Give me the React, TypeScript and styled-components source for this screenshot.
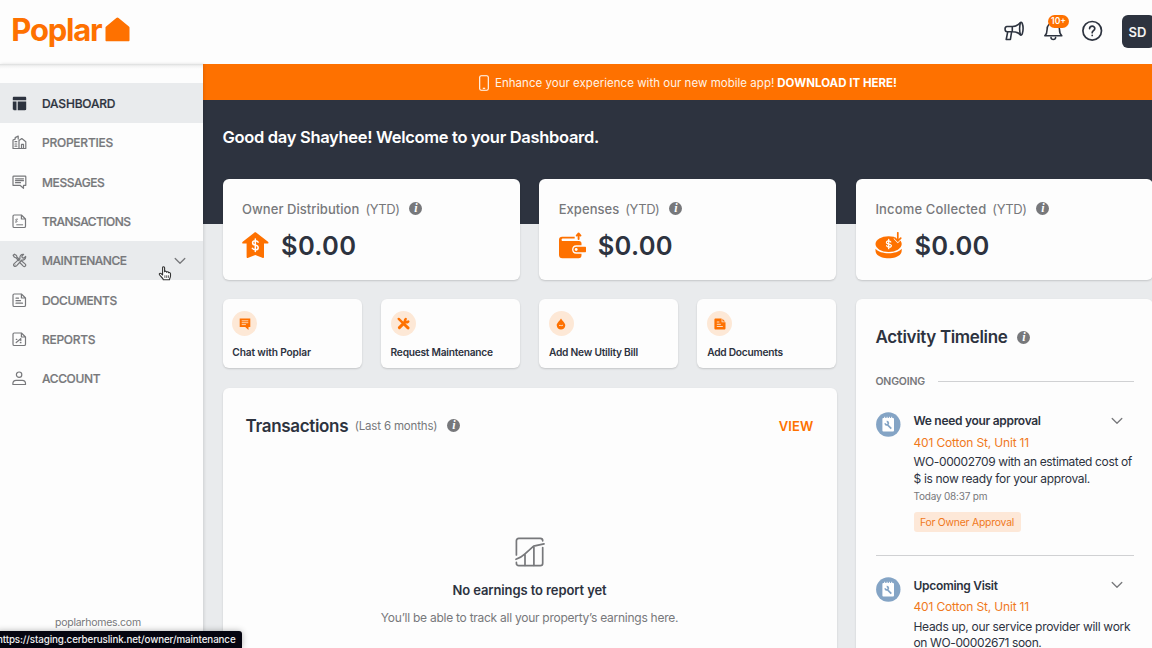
import type { ReactNode } from 'react';
import styled, { createGlobalStyle } from 'styled-components';

// --- Theme values ---
const orange = '#fe7100';
const navy = '#2d333f';
const grey = '#77787b';
const sans = `Inter, 'Liberation Sans', sans-serif`;

const GlobalStyle = createGlobalStyle`
  * {
    box-sizing: border-box;
  }

  body {
    margin: 0;
    overflow: hidden;
    font-family: ${sans};
    color: ${navy};
    background: #e9ebed;
  }
`;

// --- Layout ---
const Page = styled.div`
  position: relative;
  display: flex;
  flex-direction: column;
  width: 1152px;
  height: 648px;
  overflow: hidden;
`;

const Header = styled.header`
  display: flex;
  justify-content: space-between;
  flex: none;
  height: 64px;
  padding-left: 11.3px;
  background: #fdfdfd;
`;

const Logo = styled.div`
  display: flex;
  align-items: flex-start;
  padding-top: 12px;
  color: ${orange};
  font-size: 31px;
  line-height: 36px;
  font-weight: 700;
  letter-spacing: -1.2px;

  svg {
    margin: 5px 0 0 3px;
  }
`;

const HeaderTools = styled.div`
  display: flex;
  align-items: flex-start;
  padding-top: 20px;
  margin-right: -3px;
  color: ${navy};
`;

const ToolButton = styled.div`
  position: relative;
  width: 22px;
  height: 22px;
  margin-right: 17px;

  svg {
    display: block;
  }
`;

const CountBadge = styled.span`
  position: absolute;
  left: 6px;
  top: -5px;
  width: 21px;
  height: 13px;
  border-radius: 7px;
  background: ${orange};
  color: #fff;
  font-size: 8.5px;
  line-height: 13px;
  font-weight: 600;
  text-align: center;
`;

const Avatar = styled.div`
  width: 33px;
  height: 33px;
  margin: -5.5px 0 0 2px;
  padding-right: 2px;
  border-radius: 6px;
  background: ${navy};
  color: #f4f4f4;
  font-size: 13px;
  line-height: 34px;
  font-weight: 600;
  text-align: center;
`;

const Body = styled.div`
  display: flex;
  flex: 1;
  min-height: 0;
`;

const Sidebar = styled.nav`
  position: relative;
  display: flex;
  flex-direction: column;
  flex: none;
  width: 203px;
  padding-top: 19.3px;
  background: linear-gradient(#dcdddd, #f3f3f3 2px, #fdfdfd 5px);
  box-shadow: 1px 0 3px rgba(0, 0, 0, 0.12);
`;

const NavItem = styled.a<{ $active?: boolean; $hovered?: boolean }>`
  display: flex;
  align-items: center;
  height: 39.35px;
  padding: 1px 17px 0 12px;
  background: ${({ $active, $hovered }) => ($active || $hovered ? '#e9ebed' : 'none')};
  color: ${({ $active }) => ($active ? navy : grey)};
  font-size: 12px;
  font-weight: 500;
  -webkit-text-stroke: 0.2px;

  svg {
    flex: none;
  }
`;

const NavLabel = styled.span<{ $ls: number }>`
  flex: 1;
  margin-left: 15px;
  letter-spacing: ${({ $ls }) => $ls}px;
`;

const SiteLink = styled.div`
  margin: auto 0 17px 55px;
  color: ${grey};
  font-size: 10.5px;
  line-height: 17px;
  letter-spacing: -0.25px;
`;

const Main = styled.main`
  display: flex;
  flex-direction: column;
  flex: 1;
  min-width: 0;
`;

const Banner = styled.div`
  display: flex;
  align-items: center;
  flex: none;
  height: 36px;
  padding: 1px 0 0 276px;
  background: ${orange};
  color: #fff3e6;
  font-size: 11.5px;
  white-space: nowrap;

  svg {
    flex: none;
    margin-right: 6px;
  }

  b {
    margin-left: 3px;
    color: #fff;
    font-weight: 700;
    letter-spacing: 0.02px;
  }
`;

const BannerText = styled.span`
  letter-spacing: 0.025px;
`;

const Hero = styled.div`
  flex: none;
  height: 124px;
  padding: 27px 0 0 19.5px;
  background: ${navy};
`;

const Greeting = styled.h1`
  margin: 0;
  color: #fff;
  font-size: 16.5px;
  line-height: 21px;
  font-weight: 600;
  letter-spacing: -0.31px;
  white-space: nowrap;
`;

const Dashboard = styled.div`
  display: grid;
  grid-template-columns: 614px 297px;
  grid-template-rows: 101px 1fr;
  gap: 19.5px;
  width: 931px;
  margin: -45.5px 0 0 19.5px;
  flex: 1;
  min-height: 0;
`;

const StatRow = styled.div`
  grid-column: 1 / 3;
  display: grid;
  grid-template-columns: repeat(3, 297.2px);
  gap: 19.5px;
`;

const Column = styled.div`
  display: flex;
  flex-direction: column;
  gap: 19.5px;
`;

const Card = styled.section`
  background: #fdfdfd;
  border-radius: 6px;
  box-shadow: 0 1px 2px rgba(0, 0, 0, 0.16);
`;

const StatCard = styled(Card)`
  padding: 21.5px 19.5px 0;
`;

const StatTitle = styled.div`
  display: flex;
  align-items: center;
  height: 17px;
  color: ${grey};
  font-size: 13px;
  white-space: nowrap;
`;

const StatName = styled.span<{ $ls: number }>`
  font-weight: 500;
  letter-spacing: ${({ $ls }) => $ls}px;
`;

const StatPeriod = styled.span`
  margin: 0 10px 0 6px;
  letter-spacing: -0.45px;
`;

const StatValue = styled.div`
  display: flex;
  align-items: center;
  height: 32px;
  margin-top: 12px;
  font-size: 25.5px;
  font-weight: 600;
  letter-spacing: 0.3px;

  svg {
    flex: none;
    margin-right: 12px;
  }
`;

const InfoDot = styled.span`
  display: inline-block;
  flex: none;
  width: 13px;
  height: 13px;
  border-radius: 50%;
  background: ${grey};
  color: #fff;
  font: italic bold 12px/13px 'Liberation Serif', serif;
  text-align: center;
`;

const ActionRow = styled.div`
  display: grid;
  grid-template-columns: repeat(4, 139px);
  gap: 19.3px;
  height: 69px;
`;

const ActionCard = styled(Card)`
  padding: 12px 9.8px 0;
`;

const ActionIcon = styled.div`
  display: flex;
  align-items: center;
  justify-content: center;
  width: 25px;
  height: 25px;
  border-radius: 50%;
  background: #fde8d6;
  color: ${orange};
`;

const ActionLabel = styled.div<{ $ls: number }>`
  margin-top: 8.7px;
  font-size: 10.2px;
  line-height: 14px;
  font-weight: 600;
  letter-spacing: ${({ $ls }) => $ls}px;
  white-space: nowrap;
`;

const TransactionsCard = styled(Card)`
  display: flex;
  flex-direction: column;
  align-items: center;
  flex: 1;
  padding: 26px 23px 0;
`;

const CardHead = styled.div`
  display: flex;
  align-items: center;
  align-self: stretch;
  height: 24px;
`;

const CardTitle = styled.h2<{ $ls: number; $gap?: number }>`
  margin: 0 ${({ $gap = 0 }) => $gap}px 0 0;
  font-size: 17px;
  font-weight: 600;
  letter-spacing: ${({ $ls }) => $ls}px;
  white-space: nowrap;
`;

const CardNote = styled.span`
  margin: 0 10px 0 6.5px;
  color: ${grey};
  font-size: 11.5px;
  letter-spacing: -0.17px;
`;

const ViewLink = styled.a`
  margin-left: auto;
  color: ${orange};
  font-size: 13px;
  font-weight: 600;
  letter-spacing: 0.15px;
`;

const EmptyTitle = styled.div`
  margin-top: 13px;
  font-size: 13px;
  line-height: 20px;
  font-weight: 600;
  letter-spacing: -0.1px;
`;

const EmptyNote = styled.div`
  margin-top: 8px;
  color: ${grey};
  font-size: 12px;
  line-height: 20px;
  letter-spacing: -0.26px;
`;

const TimelineCard = styled(Card)`
  padding: 26px 19px 0 19.5px;
`;

const GroupLabel = styled.div`
  display: flex;
  align-items: center;
  gap: 13px;
  height: 14px;
  margin: 25px 0 3px;
  color: ${grey};
  font-size: 10.5px;
  font-weight: 600;
  letter-spacing: -0.2px;

  &::after {
    content: '';
    flex: 1;
    height: 1px;
    background: #d0d1d3;
  }
`;

const TimelineItem = styled.article`
  display: flex;
  align-items: flex-start;
  padding: 21px 0 22.5px;
  border-bottom: 1px solid #d0d1d3;
`;

const TimelineText = styled.div`
  flex: 1;
  margin: -1.5px 0 0 13px;
`;

const TimelineTitle = styled.div`
  display: flex;
  align-items: center;
  justify-content: space-between;
  height: 20px;
  padding-right: 11px;
  font-size: 12px;
  font-weight: 600;
  letter-spacing: -0.3px;
`;

const Address = styled.div`
  height: 22px;
  color: #f0791c;
  font-size: 12px;
  line-height: 23px;
  letter-spacing: -0.16px;
`;

const Details = styled.p`
  margin: 1.500px -10px 0 0;
  font-size: 12px;
  line-height: 16.5px;
`;

const DetailLine = styled.span<{ $ls: number }>`
  display: block;
  letter-spacing: ${({ $ls }) => $ls}px;
  white-space: nowrap;
`;

const Time = styled.div`
  height: 16px;
  margin-top: 1px;
  color: ${grey};
  font-size: 10px;
  line-height: 16px;
  letter-spacing: -0.2px;
`;

const StatusTag = styled.span`
  display: block;
  width: 107px;
  height: 20px;
  margin-top: 8px;
  border-radius: 3px;
  background: #fde8d8;
  color: #f0791c;
  font-size: 10.4px;
  line-height: 21px;
  letter-spacing: -0.22px;
  text-align: center;
`;

// Link preview the browser shows over the page
const LinkPreview = styled.div`
  position: absolute;
  left: -3px;
  bottom: 0;
  width: 245px;
  height: 17px;
  border-top-right-radius: 3px;
  background: #050510;
  box-shadow: 0 0 6px rgba(0, 0, 0, 0.3);
  color: #f2f2f2;
  font-size: 9.8px;
  line-height: 17px;
  font-weight: 500;
  letter-spacing: -0.12px;
  white-space: nowrap;
`;

const Cursor = styled.div`
  position: absolute;
  left: 157.5px;
  top: 265.5px;
`;

// --- Icons ---
interface IconProps {
  size?: number;
  box?: string;
  width?: number;
  children: ReactNode;
}

function Line({ size = 15, box = '0 0 15 15', width = 1.2, children }: IconProps) {
  return (
    <svg width={size} height={size} viewBox={box} fill="none" stroke="currentColor" strokeWidth={width} strokeLinecap="round" strokeLinejoin="round">
      {children}
    </svg>
  );
}

const Chevron = () => (
  <svg width="12" height="8" viewBox="0 0 12 8" fill="none" stroke={grey} strokeWidth="1.3" strokeLinecap="round" strokeLinejoin="round">
    <path d="M1.2 1.5 6 6.2l4.8-4.7" />
  </svg>
);

const pageOutline = 'M2.2 1h7.2L13.5 5v7.2c0 .8-.5 1.3-1.3 1.3H2.2C1.4 13.5 1 13 1 12.2V2.2C1 1.4 1.4 1 2.2 1ZM9.4 1v4h4.1';

const DashboardIcon = () => (
  <svg width="15" height="15" viewBox="0 0 15 15" fill="currentColor">
    <path d="M2 .8h11c.8 0 1.2.4 1.2 1.2v2.2H.8V2C.8 1.2 1.2.8 2 .8ZM.8 5.4h3.7v8.8H2c-.8 0-1.2-.4-1.2-1.2ZM5.7 5.4h8.5V13c0 .8-.4 1.2-1.2 1.2H5.7Z" />
  </svg>
);

const PropertiesIcon = () => (
  <Line>
    <path d="M1 13.5V5l2.200-.9V2.600l3-1.500v3M1 13.500h12.800V6.700L9.800 3.500 7 5.600v7.900M9.500 13.500V9.300h2v4.200" />
    <path d="M3 6.700h1.800M3 9h1.800M3 11.200h1.800" />
  </Line>
);

const MessagesIcon = () => (
  <Line>
    <path d="M1.800 1.200h11.400c.4 0 .6.2.6.600v8.500H11.500v3L8 10.300H1V1.800c0-.4.300-.6.800-.6Z" />
    <path d="M3.500 3.800h8M3.500 5.700h8M3.500 7.700h5" />
  </Line>
);

const TransactionsIcon = () => (
  <Line>
    <path d={pageOutline} />
    <path d="M5.500 5.200H4.400c-1 0-1 1.400 0 1.400s1.100 1.400 0 1.400H3.400M4.700 10.800h6" strokeWidth="1" />
  </Line>
);

const ToolsIcon = () => (
  <Line>
    <path d="m1.200 2.300 1.300-1.100 2 1.200.4 1.400 3 3M1.200 2.300l1.300 2 1.400.5 3 2.900" />
    <path d="M8 5.400c-.5-2 1-4.500 3.600-4.100L9.900 3.200l.3 1.500 1.600.4 1.800-1.800c.5 2.500-1.700 4.200-3.800 3.700L4.500 12.900c-1.700 1.700-3.900-.6-2.300-2.300Z" />
    <path d="m9.400 7.800 3.900 3.300c1.200 1.400-.6 3.300-2 2L7.700 9.500M3.200 12h.1" />
  </Line>
);

const DocumentsIcon = () => (
  <Line>
    <path d={pageOutline} />
    <path d="M4 5.200h2.500M4 7.700h4.500M4 10.200h6.500" />
  </Line>
);

const ReportsIcon = () => (
  <Line>
    <path d={pageOutline} />
    <path d="m4.200 10.500 4.600-3.800M8.800 6.700v2M4.300 7.400h.5M8.300 10.700h.7" />
  </Line>
);

const AccountIcon = () => (
  <Line>
    <circle cx="7.100" cy="3.700" r="2.700" />
    <path d="M.9 13.500v-1c0-2 1.300-3.200 3.200-3.200h6.200c1.900 0 3.200 1.200 3.200 3.200v1Z" />
  </Line>
);

const MegaphoneIcon = () => (
  <Line size={22} box="0 0 22 22" width={1.6}>
    <path d="M4 6.500h5.500c3 0 5.500-1.300 8-3.900 1.300-1.300 2.600 2 2.600 6s-1.300 7.500-2.600 6.200c-2.500-2.300-5-3.100-8-3.100H4.100c-2.500 0-2.900-5-.1-5.200ZM9.300 6.500v5.200M4.700 11.800 3.200 19.500h4.200l1.200-7.600" />
    <path d="M17.500 2.700c-1.200 2.800-1.200 9.300 0 12" />
  </Line>
);

const BellIcon = () => (
  <Line size={22} box="0 0 22 22" width={1.6}>
    <path d="M2.800 15.800c1.700-1.500 2.300-3.200 2.300-6.300 0-4 2.300-6.500 6.200-6.500s6.200 2.500 6.200 6.500c0 3.100.6 4.800 2.300 6.300ZM9 17.500c.2 2.700 4.400 2.700 4.600 0" />
  </Line>
);

const HelpIcon = () => (
  <Line size={22} box="0 0 22 22" width={1.7}>
    <circle cx="11.200" cy="10.800" r="9.300" />
    <path d="M8.600 8.600c0-3.300 5.300-3.100 5.200 0 0 2.100-2.600 2-2.600 4.100M11.200 15.300v.2" />
  </Line>
);

const PhoneIcon = () => (
  <svg width="10" height="16" viewBox="0 0 10 16" fill="none" stroke="#fff" strokeWidth="1.1">
    <rect x=".7" y=".7" width="8.600" height="14.600" rx="1.600" />
    <path d="M3.800 13.300h2.400" />
  </svg>
);

const PayoutIcon = () => (
  <svg width="27" height="27" viewBox="0 0 27 27">
    <path d="M12.200.8c.7-.6 1.500-.6 2.200 0L26 9.700c.9.800.5 1.900-.7 1.900H22v13.200c0 1.200-.7 1.600-1.700 1l-7-2.700-7 2.700c-1 .6-1.700.2-1.700-1V11.600H1.300c-1.200 0-1.500-1.100-.6-1.900Z" fill={orange} />
    <path d="M16.100 10.100c-.6-1-1.500-1.300-2.800-1.300-3.600 0-3.600 4 0 4.400 3.900.4 3.800 4.600.1 4.600-1.400 0-2.400-.5-3-1.400M13.300 7v12.600" fill="none" stroke="#fff" strokeWidth="1.5" strokeLinecap="round" />
  </svg>
);

const WalletIcon = () => (
  <svg width="27" height="27" viewBox="0 0 27 27">
    <path d="M0 7.700c0-1.900 1.200-3 3.100-3h12.600V6.500H3.500c-1.300.2-1.200 2.500.2 2.600H20c1.600 0 2.500.9 2.500 2.500v1.600h-5.300c-5.500 0-5.500 8.500 0 8.500h5.300v1.600c0 1.900-1 3-2.900 3H3.400C1.200 26.300 0 25 0 23Z" fill={orange} />
    <path d="M17.200 14.700H26c.7 0 1 .4 1 1v3.600c0 .7-.3 1-1 1h-8.800c-3.700 0-3.700-5.600 0-5.600Z" fill={orange} />
    <circle cx="17.200" cy="17.500" r="1.400" fill="#fff" />
    <path d="M19.600 7V1.900M17.700 3.600l1.900-2.100 1.900 2.100" fill="none" stroke={orange} strokeWidth="1.900" strokeLinecap="round" strokeLinejoin="round" />
  </svg>
);

const CoinIcon = () => (
  <svg width="27" height="27" viewBox="0 0 27 27">
    <ellipse cx="13.600" cy="12.100" rx="13.100" ry="7.900" fill={orange} />
    <path d="M.5 16.800c4.800 6 21.400 6 26.200 0v2c0 9.900-26.200 9.900-26.200 0Z" fill={orange} />
    <path d="M22.800 1v6.500M20 5.300l2.800 2.900 2.900-2.900" fill="none" stroke="#fdfdfd" strokeWidth="4.200" />
    <path d="M15.800 10c-1.300-2.100-5-1.100-4.200 1 .7 1.600 4.200.4 4.700 2.400.4 2.100-3.700 2.500-4.700.4M13.700 7.500v9.200" fill="none" stroke="#fff" strokeWidth="1.300" strokeLinecap="round" />
    <path d="M22.800.8v8M20 6.200l2.800 2.900 2.900-2.900" fill="none" stroke={orange} strokeWidth="1.700" strokeLinecap="round" />
  </svg>
);

const ChatFill = () => (
  <svg width="12" height="12" viewBox="0 0 12 12">
    <path d="M.7.5h10.600v8.400H9.500V12L6.200 8.900H.7Z" fill={orange} />
    <path d="M2.700 2.800h6.600M2.700 4.700h6.600M2.700 6.600h4.200" stroke="#fde8d6" strokeWidth=".8" />
  </svg>
);

const ToolsFill = () => (
  <svg width="13" height="13" viewBox="0 0 13 13" fill="none" stroke={orange} strokeLinecap="round">
    <path d="m1.700 1.900 3.600 3.500" strokeWidth="2.400" />
    <path d="m8 8 3 2.900M2.400 10.600l6-6" strokeWidth="2.900" />
    <path d="M8.700 1.900c-2 2.600.4 4.500 2.600 2.600" strokeWidth="2.400" />
  </svg>
);

const DropFill = () => (
  <svg width="10" height="12" viewBox="0 0 10 12">
    <path d="M5 .5C4.500 1.900.7 4.900.7 7.300c0 5.700 8.600 5.700 8.600 0C9.300 4.900 5.500 1.900 5 .5Z" fill={orange} />
    <path d="M3 7.700c1.200-1.200 2.300.8 4-.6" fill="none" stroke="#fde8d6" strokeWidth=".9" />
  </svg>
);

const DocFill = () => (
  <svg width="12" height="12" viewBox="0 0 12 12">
    <path d="M1.600.5h6v3.700h3.900v6c0 .8-.4 1.300-1.300 1.300H1.600C.8 11.500.4 11 .4 10.200V1.800C.4 1 .8.5 1.6.5ZM8.400.7l2.800 2.800H8.400Z" fill={orange} />
    <path d="M2.800 4h2.500M2.800 6.300h4M2.800 8.500h6" stroke="#fde8d6" strokeWidth=".9" />
  </svg>
);

const EmptyChart = styled.svg`
  flex: none;
  margin-top: 99px;
`;

const ChartIcon = () => (
  <EmptyChart width="30" height="30" viewBox="0 0 30 30" fill="none" stroke={grey} strokeWidth="1.7" strokeLinecap="round" strokeLinejoin="round">
    <path d="M1.400 18V3.800c0-1.600.8-2.400 2.400-2.400h21.500c1.600 0 2.400.8 2.400 2.400M27.700 10.500v15.700c0 1.600-.8 2.400-2.400 2.400H3.800c-1.600 0-2.400-.8-2.400-2.400v-.8" />
    <path d="M1 22.300c3.500-1.100 6.300-2.900 9-5.400l8.600-7.700L29 6.800M10 28.300V17.500M18.900 28.300V9.500" />
  </EmptyChart>
);

const WorkOrderIcon = () => (
  <svg width="25" height="25" viewBox="0 0 25 25">
    <circle cx="12.300" cy="12.500" r="12.200" fill="#84a4c5" />
    <rect x="6.400" y="6" width="11.600" height="13.600" rx="1" fill="#fff" />
    <path d="M8.700 4.800v2M11.100 4.800v2M13.400 4.800v2M15.700 4.800v2" stroke="#fff" strokeWidth="1" />
    <path d="m11.300 12.700 4 4M9.200 11.200c.1 2.500 3.500 2.100 3.100-.3-.2-1-1-1.300-1.600-1.200" fill="none" stroke="#84a4c5" strokeWidth="1.700" />
  </svg>
);

const HandCursor = () => (
  <svg width="14" height="17" viewBox="0 0 14 17" fill="#fff" stroke="#333" strokeWidth="1.1" strokeLinejoin="round">
    <path d="M4.600 9V1.800c0-1.500 2-1.500 2 0v3.900c.6-1 2-.6 2 .5.700-.8 2-.4 2 .6.900-.6 1.900 0 1.900 1v2.300c0 1.600-1 2.100-1 3.700H5.300c0-1.600-2.400-2.900-3.800-5-.8-1.200.8-2.100 1.700-1.200Z" />
    <path d="M6.900 9.300v2.600M8.700 9.300v2.600M10.400 9.300v2.600" strokeWidth=".8" />
  </svg>
);

// --- Data ---
const navItems = [
  { label: 'DASHBOARD', icon: <DashboardIcon />, ls: -0.18 },
  { label: 'PROPERTIES', icon: <PropertiesIcon />, ls: -0.25 },
  { label: 'MESSAGES', icon: <MessagesIcon />, ls: -0.4 },
  { label: 'TRANSACTIONS', icon: <TransactionsIcon />, ls: -0.53 },
  { label: 'MAINTENANCE', icon: <ToolsIcon />, ls: -0.45 },
  { label: 'DOCUMENTS', icon: <DocumentsIcon />, ls: -0.4 },
  { label: 'REPORTS', icon: <ReportsIcon />, ls: -0.3 },
  { label: 'ACCOUNT', icon: <AccountIcon />, ls: -0.35 },
];

const stats = [
  { name: 'Owner Distribution', icon: <PayoutIcon />, ls: 0.05 },
  { name: 'Expenses', icon: <WalletIcon />, ls: 0.05 },
  { name: 'Income Collected', icon: <CoinIcon />, ls: 0.16 },
];

const actions = [
  { label: 'Chat with Poplar', icon: <ChatFill />, ls: -0.15 },
  { label: 'Request Maintenance', icon: <ToolsFill />, ls: -0.25 },
  { label: 'Add New Utility Bill', icon: <DropFill />, ls: -0.22 },
  { label: 'Add Documents', icon: <DocFill />, ls: -0.25 },
];

const timeline = [
  {
    title: 'We need your approval',
    lines: [
      { text: 'WO-00002709 with an estimated cost of', ls: -0.36 },
      { text: '$ is now ready for your approval.', ls: -0.32 },
    ],
    time: 'Today 08:37 pm',
    status: 'For Owner Approval',
  },
  {
    title: 'Upcoming Visit',
    lines: [
      { text: 'Heads up, our service provider will work', ls: -0.3 },
      { text: 'on WO-00002671 soon.', ls: -0.38 },
    ],
  },
];

export default function App() {
  return (
    <Page>
      <GlobalStyle />
      <Header>
        <Logo>
          Poplar
          <svg width="25" height="25" viewBox="0 0 25 25" fill={orange}>
            <path d="M11.300 1c.8-.7 1.500-.7 2.300 0l10.300 8.400c.4.4.6.700.6 1.200v12.600c0 .8-.3 1.100-1.100 1.100H1.600c-.8 0-1.100-.3-1.100-1.100V10.600c0-.5.200-.8.600-1.200Z" />
          </svg>
        </Logo>
        <HeaderTools>
          <ToolButton><MegaphoneIcon /></ToolButton>
          <ToolButton>
            <BellIcon />
            <CountBadge>10+</CountBadge>
          </ToolButton>
          <ToolButton><HelpIcon /></ToolButton>
          <Avatar>SD</Avatar>
        </HeaderTools>
      </Header>
      <Body>
        <Sidebar>
          {navItems.map(item => (
            <NavItem key={item.label} $active={item.label === 'DASHBOARD'} $hovered={item.label === 'MAINTENANCE'}>
              {item.icon}
              <NavLabel $ls={item.ls}>{item.label}</NavLabel>
              {item.label === 'MAINTENANCE' && <Chevron />}
            </NavItem>
          ))}
          <SiteLink>poplarhomes.com</SiteLink>
        </Sidebar>
        <Main>
          <Banner>
            <PhoneIcon />
            <BannerText>Enhance your experience with our new mobile app!</BannerText>
            <b>DOWNLOAD IT HERE!</b>
          </Banner>
          <Hero>
            <Greeting>Good day Shayhee! Welcome to your Dashboard.</Greeting>
          </Hero>
          <Dashboard>
            <StatRow>
              {stats.map(stat => (
                <StatCard key={stat.name}>
                  <StatTitle>
                    <StatName $ls={stat.ls}>{stat.name}</StatName>
                    <StatPeriod>(YTD)</StatPeriod>
                    <InfoDot>i</InfoDot>
                  </StatTitle>
                  <StatValue>{stat.icon}$0.00</StatValue>
                </StatCard>
              ))}
            </StatRow>
            <Column>
              <ActionRow>
                {actions.map(action => (
                  <ActionCard key={action.label}>
                    <ActionIcon>{action.icon}</ActionIcon>
                    <ActionLabel $ls={action.ls}>{action.label}</ActionLabel>
                  </ActionCard>
                ))}
              </ActionRow>
              <TransactionsCard>
                <CardHead>
                  <CardTitle $ls={-0.32}>Transactions</CardTitle>
                  <CardNote>(Last 6 months)</CardNote>
                  <InfoDot>i</InfoDot>
                  <ViewLink>VIEW</ViewLink>
                </CardHead>
                <ChartIcon />
                <EmptyTitle>No earnings to report yet</EmptyTitle>
                <EmptyNote>You’ll be able to track all your property’s earnings here.</EmptyNote>
              </TransactionsCard>
            </Column>
            <TimelineCard>
              <CardHead>
                <CardTitle $ls={-0.35} $gap={10}>Activity Timeline</CardTitle>
                <InfoDot>i</InfoDot>
              </CardHead>
              <GroupLabel>ONGOING</GroupLabel>
              {timeline.map(item => (
                <TimelineItem key={item.title}>
                  <WorkOrderIcon />
                  <TimelineText>
                    <TimelineTitle>
                      {item.title}
                      <Chevron />
                    </TimelineTitle>
                    <Address>401 Cotton St, Unit 11</Address>
                    <Details>
                      {item.lines.map(line => (
                        <DetailLine key={line.text} $ls={line.ls}>{line.text}</DetailLine>
                      ))}
                    </Details>
                    {item.time && <Time>{item.time}</Time>}
                    {item.status && <StatusTag>{item.status}</StatusTag>}
                  </TimelineText>
                </TimelineItem>
              ))}
            </TimelineCard>
          </Dashboard>
        </Main>
      </Body>
      <LinkPreview>https://staging.cerberuslink.net/owner/maintenance</LinkPreview>
      <Cursor>
        <HandCursor />
      </Cursor>
    </Page>
  );
}
